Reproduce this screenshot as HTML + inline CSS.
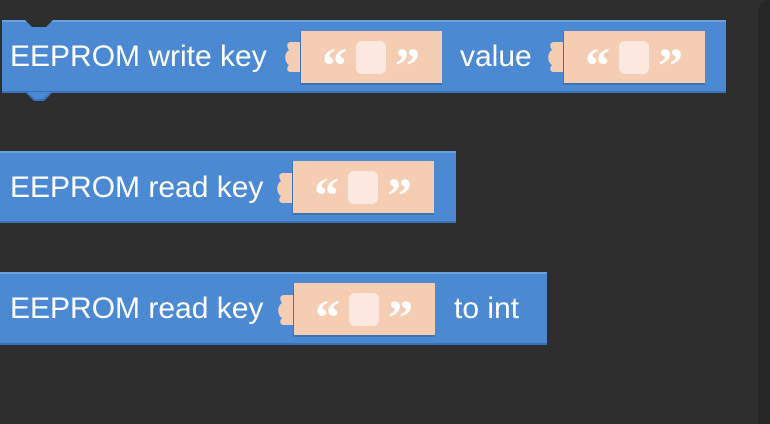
<!DOCTYPE html>
<html><head><style>
body{margin:0;width:770px;height:424px;background:#2e2e2e;overflow:hidden;position:relative;font-family:"Liberation Sans",sans-serif}
.rs{position:absolute;left:758px;top:0;width:12px;height:424px;background:#262626;border-top-left-radius:14px}
.b{position:absolute;background:#4b8ad3;border-top:2px solid #6aa2e0;border-bottom:2px solid #3b72b6;box-sizing:border-box}
.t{position:absolute;color:#fff;font-size:30px;line-height:32px;white-space:nowrap}
.in{position:absolute;width:142px;height:54px;background:#f5cdb2;box-sizing:border-box;border-left:1px solid #3f74b4;border-bottom:2px solid #3f74b4}
.tab{position:absolute;width:16px;height:30px}
.q{position:absolute;color:#fff;font-family:"Liberation Serif",serif;font-weight:bold;font-size:50px;line-height:50px;top:9px}
.sq{position:absolute;left:55px;top:10px;width:30px;height:33px;background:#fbe8df;border-radius:6px}
</style></head><body>
<div class="rs"></div>

<div class="b" style="left:2px;top:20px;width:724px;height:73px"></div>
<svg style="position:absolute;left:0;top:0" width="770" height="424">
<polygon points="24,19 32,27 46,27 54,19" fill="#2e2e2e"/>
<polygon points="26,93 34,101 44,101 52,93" fill="#3b72b6"/>
<polygon points="27,92 35,99 43,99 51,92" fill="#4b8ad3"/>
</svg>
<div class="t" style="left:10px;top:41px">EEPROM write key</div>
<svg class="tab" style="left:285px;top:42px" viewBox="0 0 16 30"><path d="M16 0 H6 C2 0 1 4 4 8 C-1 11 -1 20 4 23 C1 26 2 30 6 30 H16Z" fill="#f5cdb2"/></svg>
<div class="in" style="left:300px;top:31px"><span class="q" style="left:21px">“</span><div class="sq"></div><span class="q" style="left:94px">”</span></div>
<div class="t" style="left:460px;top:41px">value</div>
<svg class="tab" style="left:548px;top:42px" viewBox="0 0 16 30"><path d="M16 0 H6 C2 0 1 4 4 8 C-1 11 -1 20 4 23 C1 26 2 30 6 30 H16Z" fill="#f5cdb2"/></svg>
<div class="in" style="left:563px;top:31px"><span class="q" style="left:21px">“</span><div class="sq"></div><span class="q" style="left:94px">”</span></div>

<div class="b" style="left:0;top:151px;width:456px;height:72px"></div>
<div class="t" style="left:10px;top:172px">EEPROM read key</div>
<svg class="tab" style="left:277px;top:173px" viewBox="0 0 16 30"><path d="M16 0 H6 C2 0 1 4 4 8 C-1 11 -1 20 4 23 C1 26 2 30 6 30 H16Z" fill="#f5cdb2"/></svg>
<div class="in" style="left:292px;top:161px"><span class="q" style="left:21px">“</span><div class="sq"></div><span class="q" style="left:94px">”</span></div>

<div class="b" style="left:0;top:272px;width:547px;height:73px"></div>
<div class="t" style="left:10px;top:293px">EEPROM read key</div>
<svg class="tab" style="left:278px;top:295px" viewBox="0 0 16 30"><path d="M16 0 H6 C2 0 1 4 4 8 C-1 11 -1 20 4 23 C1 26 2 30 6 30 H16Z" fill="#f5cdb2"/></svg>
<div class="in" style="left:293px;top:283px"><span class="q" style="left:21px">“</span><div class="sq"></div><span class="q" style="left:94px">”</span></div>
<div class="t" style="left:454px;top:293px">to int</div>
</body></html>
